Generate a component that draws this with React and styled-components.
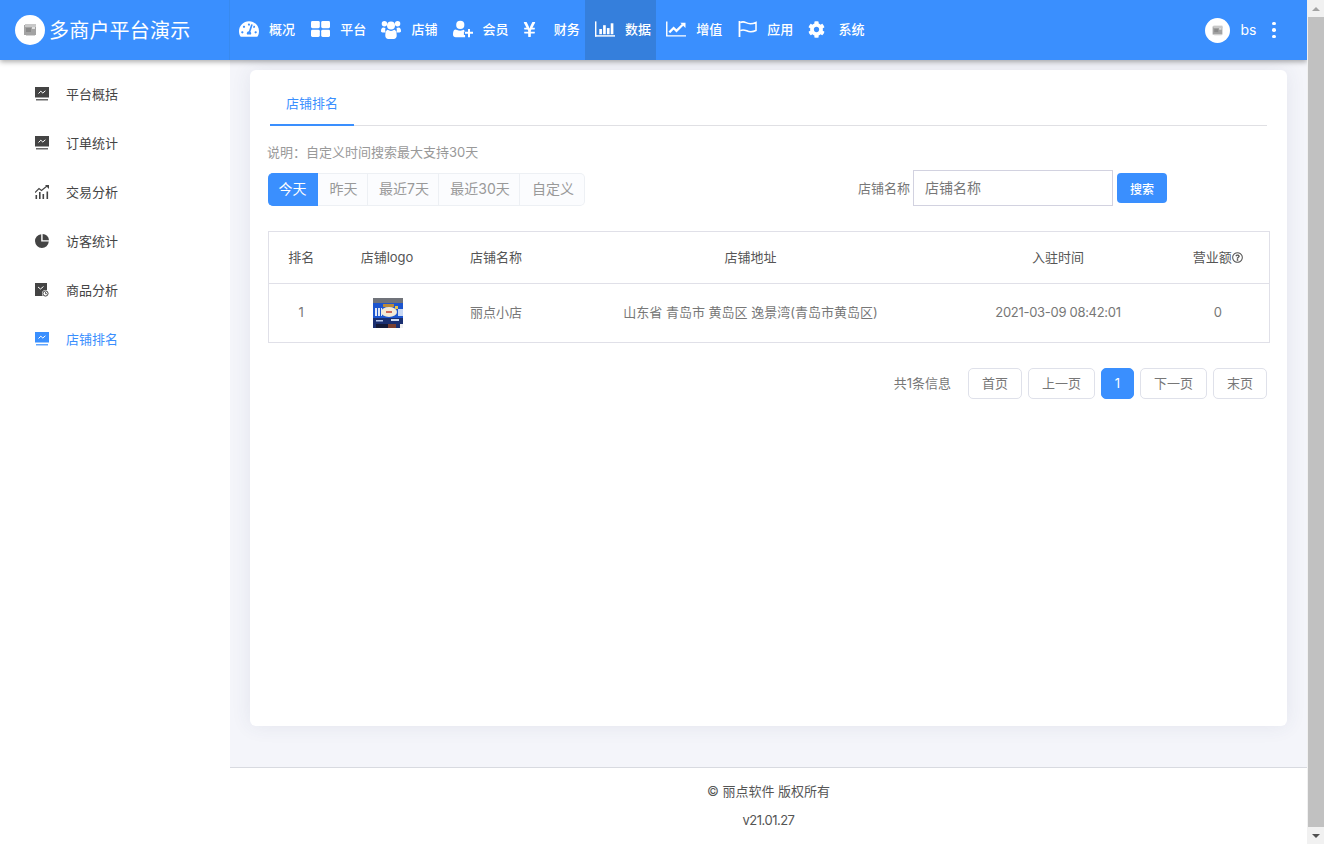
import React from 'react';
import styled, { createGlobalStyle } from 'styled-components';
import { FaTachometerAlt, FaYenSign, FaCog, FaRegQuestionCircle } from 'react-icons/fa';

const Global = createGlobalStyle`
  html { overflow: hidden; }
  body { margin: 0; padding-right: 17px; background: #f4f5fa; font-family: Inter, "Noto Sans CJK SC", sans-serif; font-size: 13px; color: #666; }
  * { box-sizing: border-box; }
`;

const ScrollBar = styled.div`
  position: fixed; top: 0; right: 0; bottom: 0; width: 17px; background: #f1f1f1; z-index: 5;
  display: flex; flex-direction: column;
`;
const ScrollArrow = styled.div`
  height: 17px; flex: none; display: flex; align-items: center; justify-content: center;
  &::before {
    content: ''; width: 0; height: 0; border-left: 4.5px solid transparent; border-right: 4.5px solid transparent;
    ${p => (p.$down ? 'border-top: 4px solid #505050;' : 'border-bottom: 4px solid #a3a3a3;')}
  }
`;
const ScrollThumb = styled.div`flex: 1; background: #c1c1c1; margin-left: 1px;`;

const Header = styled.header`
  display: flex; align-items: stretch; height: 60px; background: #3a8ffe; color: #fff;
  box-shadow: 0 2px 5px rgba(0,0,0,.32); position: relative; z-index: 2;
`;
const Brand = styled.div`
  width: 230px; flex: none; display: flex; align-items: center; gap: 4px; padding: 0 0 1px 15px;
  border-right: 1px solid #388aef;
  font-size: 20px; font-weight: 400; letter-spacing: .2px;
`;
const LogoDisc = styled.span`
  width: ${p => p.$size}px; height: ${p => p.$size}px; border-radius: 50%; background: #fff;
  display: flex; align-items: center; justify-content: center; flex: none;
`;
const Nav = styled.nav`display: flex; flex: 1; margin-left: -1px;`;
const NavItem = styled.a`
  width: 71.2px; flex: none; display: flex; align-items: center; padding: 0 0 2px 10px; gap: 10px;
  font-weight: 500; color: #fff; white-space: nowrap;
  background: ${p => (p.$active ? '#357fdc' : 'transparent')};
`;
const NavIcon = styled.span`
  width: 20px; height: 20px; flex: none; display: flex; align-items: center; justify-content: center; font-size: 20px;
`;
const NavLabel = styled.span`padding-bottom: 2px;`;
const User = styled.div`display: flex; align-items: center; padding-right: 31px;`;
const UserName = styled.span`font-size: 14px; margin-left: 10px; width: 32px; padding-bottom: 2px;`;
const Dots = styled.span`
  display: flex; flex-direction: column; gap: 3px;
  i { width: 3.6px; height: 3.6px; border-radius: 50%; background: #fff; display: block; }
`;

const Body = styled.div`display: flex; align-items: stretch;`;
const Side = styled.aside`
  width: 230px; flex: none; background: #fff; padding-top: 9px;
`;
const SideItem = styled.a`
  display: flex; align-items: center; height: 49px; padding-left: 35px; gap: 17px;
  color: ${p => (p.$active ? '#3a8ffe' : '#444')};
`;
const Main = styled.main`flex: 1; min-width: 0; display: flex; flex-direction: column;`;
const Content = styled.div`padding: 10px 20px 41px;`;
const Card = styled.section`
  height: 656px; background: #fff; border-radius: 6px; padding: 20px 20px 0 17px;
  box-shadow: 0 0 20px rgba(60,70,110,.09);
`;
const Tabs = styled.div`
  margin-left: 3px; height: 36px; border-bottom: 1px solid #e0e0e4; display: flex;
`;
const Tab = styled.div`
  width: 84px; height: 36px; text-align: center; line-height: 27px; color: #3a8ffe;
  border-bottom: 2px solid #3a8ffe;
`;
const Note = styled.p`margin: 16px 0 0; line-height: 20px; color: #999;`;
const Toolbar = styled.div`display: flex; align-items: center; margin-top: 8px; margin-left: 1px; height: 36px;`;
const Group = styled.div`display: flex; height: 33px; margin-top: 3px; flex: none;`;
const GroupBtn = styled.div`
  width: ${p => p.$w}px; display: flex; align-items: center; justify-content: center; font-size: 14px;
  padding: 0 0 3px ${p => (p.$active ? '0' : '2px')};
  color: ${p => (p.$active ? '#fff' : '#999')};
  background: ${p => (p.$active ? '#3a8ffe' : '#fbfcfe')};
  border: 1px solid ${p => (p.$active ? '#3a8ffe' : '#edf0f4')};
  border-left: 0;
  &:first-child { border-radius: 5px 0 0 5px; }
  &:last-child { border-radius: 0 5px 5px 0; }
`;
const SearchLabel = styled.label`margin-left: 272px; width: 56px; padding: 0 0 2px 1px; color: #777;`;
const SearchInput = styled.input`
  width: 200px; height: 36px; border: 1px solid #d2d2e0; padding: 0 11px 2px; font: inherit; font-size: 14px; outline: 0;
  &::placeholder { color: #777; opacity: 1; }
`;
const SearchBtn = styled.button`
  margin-left: 4px; width: 50px; height: 30px; border: 0; border-radius: 4px; background: #3a8ffe; color: #fff;
  font: inherit; font-size: 12px; font-weight: 500; padding: 0;
`;
const Table = styled.table`
  width: 1002px; margin: 25px 0 0 1px; border-collapse: collapse; table-layout: fixed; border: 1px solid #e0e0e8;
`;
const Th = styled.th`height: 52px; font-weight: 400; color: #555; text-align: center; border-bottom: 1px solid #e0e0e8; padding: 0 1px 2px 0;`;
const HelpIcon = styled(FaRegQuestionCircle)`font-size: 11px; vertical-align: -1px;`;
const Td = styled.td`
  height: 59px; color: #777; text-align: center; padding: 0 1px 3px 0;
  letter-spacing: ${p => (p.$tight ? '-0.3px' : '0')};
`;
const ThumbCell = styled.td`height: 59px; padding: 0 0 1px 1px;`;
const Thumb = styled.svg`display: block; margin: 0 auto;`;
const Pager = styled.div`display: flex; align-items: center; justify-content: flex-end; gap: 6px; margin: 25px 0 0; height: 31px;`;
const PagerInfo = styled.span`color: #777; margin-right: 11px; padding-bottom: 2px;`;
const PageBtn = styled.div`
  width: ${p => p.$w}px; height: 31px; display: flex; align-items: center; justify-content: center; border-radius: 5px; padding-bottom: 2px;
  border: 1px solid ${p => (p.$active ? '#3a8ffe' : '#dfe1ea')};
  background: ${p => (p.$active ? '#3a8ffe' : '#fff')};
  color: ${p => (p.$active ? '#fff' : '#777')};
`;
const Footer = styled.footer`
  height: 78px; background: #fff; border-top: 1px solid #d8dae0; text-align: center; color: #555;
  padding-top: 13px; line-height: 20px;
`;
const FooterLine = styled.div`margin-bottom: 9px;`;
const VersionLine = styled(FooterLine)`letter-spacing: -0.5px;`;

const Logo = ({ s = 16 }) => (
  <svg width={s} height={s} viewBox="0 0 16 16">
    <rect x="2" y="3" width="12" height="10" fill="#a3a3a3" />
    <rect x="3" y="2" width="11" height="3" fill="#c8c8c8" />
    <rect x="4" y="6" width="5" height="4" fill="#8a8a8a" />
    <rect x="10" y="5" width="3" height="2" fill="#e0e0e0" />
    <rect x="4" y="13" width="9" height="1" fill="#d4d4d4" />
  </svg>
);

const ThLargeIcon = () => (
  <svg width="19" height="16" viewBox="0 0 19 16" fill="#fff">
    <rect x="0" y="0" width="8.8" height="7.2" rx="1.4" />
    <rect x="10.2" y="0" width="8.8" height="7.2" rx="1.4" />
    <rect x="0" y="8.8" width="8.8" height="7.2" rx="1.4" />
    <rect x="10.2" y="8.8" width="8.8" height="7.2" rx="1.4" />
  </svg>
);
const UsersIcon = () => (
  <svg width="20" height="19" viewBox="0 0 20 19" fill="#fff">
    <circle cx="3.4" cy="3.8" r="2.7" />
    <circle cx="16.6" cy="3.8" r="2.7" />
    <circle cx="10" cy="5.6" r="4" />
    <path d="M0 11c0-2.4 1-3.6 2.2-3.6.9 0 1.5.5 2.3.7-.4.9-.4 2.7.2 4.3H1.500C.6 12.400 0 12 0 11z" />
    <path d="M20 11c0-2.4-1-3.600-2.200-3.600-.9 0-1.500.5-2.300.7.4.9.4 2.700-.2 4.300h3.200c.9 0 1.500-.4 1.500-1.400z" />
    <path d="M5.500 10.500c.9-1 1.500-.8 2.300-.2 1.300.8 3.100.8 4.400 0 .8-.6 1.400-.8 2.300.2 1 1.200 1.200 3.500 1.200 5.200 0 1.800-1.200 3.300-3 3.300H7.300c-1.800 0-3-1.500-3-3.300 0-1.700.2-4 1.200-5.200z" />
  </svg>
);
const UserPlusIcon = () => (
  <svg width="22" height="18" viewBox="0 0 22 18" fill="#fff">
    <circle cx="8" cy="4.500" r="4.500" />
    <path d="M2.500 9.500c1 0 2.700 1.300 5.500 1.300 1.700 0 3-.5 4-1 .6 1 .8 1.500.8 2.200H12v3.500h1.300V18H3c-1.800 0-3-1-3-3 0-2.800.7-5.500 2.500-5.500z" />
    <path d="M16.500 9h2.200v3h3.300v2.200h-3.300V18h-2.200v-3.800h-3.300V12h3.300z" />
  </svg>
);
const BarChartIcon = () => (
  <svg width="21" height="16" viewBox="0 0 21 16" fill="#fff">
    <rect x="0" y="0" width="1.500" height="16" />
    <rect x="0" y="14.500" width="21" height="1.500" />
    <rect x="4.500" y="8" width="2.800" height="5.500" />
    <rect x="8.500" y="4" width="2.800" height="9.500" />
    <rect x="12.500" y="7" width="2.800" height="6.500" />
    <rect x="16.500" y="2" width="2.800" height="11.500" />
  </svg>
);
const LineChartIcon = () => (
  <svg width="21" height="16" viewBox="0 0 21 16" fill="none">
    <path d="M.8 0v15.200H21" stroke="#fff" strokeWidth="1.500" />
    <path d="M3.500 11.500 8 7l3 3 6.500-6.500" stroke="#fff" strokeWidth="2.400" />
    <path d="M15 1.500h5.500V7z" fill="#fff" />
  </svg>
);
const FlagIcon = () => (
  <svg width="19" height="16" viewBox="0 0 19 16" fill="none" stroke="#fff">
    <path d="M1.500 0v16" strokeWidth="1.800" />
    <path d="M2.300 1.700c2-1.300 3.800-1 5.700 0 2.500 1.300 6 1.500 10-.2v8c-3.500 1.600-6.700 1.500-9.300.3-2.400-1.100-4.500-1.300-6.400-.2" strokeWidth="1.500" />
  </svg>
);

const nav = [
  [<FaTachometerAlt />, '概况'],
  [<ThLargeIcon />, '平台'],
  [<UsersIcon />, '店铺'],
  [<UserPlusIcon />, '会员'],
  [<FaYenSign style={{ fontSize: 17, marginLeft: -8 }} />, '财务'],
  [<BarChartIcon />, '数据', true],
  [<LineChartIcon />, '增值'],
  [<FlagIcon />, '应用'],
  [<FaCog style={{ fontSize: 17, marginLeft: -5 }} />, '系统'],
];

const MonitorIcon = ({ c }) => (
  <svg width="14" height="14" viewBox="0 0 14 14">
    <rect y="0" width="14" height="10.500" fill={c} />
    <path d="M3.500 6.500 5.800 4.200l2 1.800 2.600-2.200" fill="none" stroke="#fff" strokeWidth="1" />
    <rect x="1" y="12.200" width="12" height="1.200" fill={c} />
  </svg>
);
const TradeIcon = () => (
  <svg width="14" height="14" viewBox="0 0 14 14" fill="#444">
    <path d="M0 7.500 4 3.500l2.500 2L12 1" fill="none" stroke="#444" strokeWidth="1.200" />
    <path d="M10 0h4v4z" />
    <rect x="0.500" y="10" width="1.600" height="4" />
    <rect x="4" y="7" width="1.600" height="7" />
    <rect x="7.500" y="9" width="1.600" height="5" />
    <rect x="11.500" y="6.500" width="1.600" height="7.500" />
  </svg>
);
const PieIcon = () => (
  <svg width="14" height="14" viewBox="0 0 14 14" fill="#444">
    <path d="M6.200.2v7.400h7.600A6.900 6.900 0 1 1 6.200.2z" />
    <path d="M7.600 0A6.600 6.600 0 0 1 14 6.200H7.600z" />
  </svg>
);
const GoodsIcon = () => (
  <svg width="14" height="14" viewBox="0 0 14 14">
    <rect width="12" height="13" fill="#444" />
    <path d="M3 4l2.500 2L8.500 3.500" fill="none" stroke="#fff" strokeWidth="1" />
    <circle cx="10.500" cy="10.500" r="3.500" fill="#fff" />
    <circle cx="10.500" cy="10.500" r="2.600" fill="none" stroke="#444" strokeWidth="1" />
    <path d="M10.500 9v1.700h1.500" fill="none" stroke="#444" strokeWidth=".8" />
  </svg>
);

const side = [
  [<MonitorIcon c="#444" />, '平台概括'],
  [<MonitorIcon c="#444" />, '订单统计'],
  [<TradeIcon />, '交易分析'],
  [<PieIcon />, '访客统计'],
  [<GoodsIcon />, '商品分析'],
  [<MonitorIcon c="#3a8ffe" />, '店铺排名', true],
];

const ranges = [['今天', 50, true], ['昨天', 50], ['最近7天', 71], ['最近30天', 81], ['自定义', 65]];
const cols = [66, 106, 112, 397, 218, 102];
const heads = ['排名', '店铺logo', '店铺名称', '店铺地址', '入驻时间', '营业额'];
const pages = [['首页', 54], ['上一页', 67], ['1', 33, true], ['下一页', 67], ['末页', 54]];

const StoreThumb = () => (
  <Thumb width="30" height="30" viewBox="0 0 30 30">
    <rect width="30" height="30" fill="#1c55cf" />
    <rect width="30" height="5" fill="#70737a" />
    <rect x="2" y="10" width="7" height="8" fill="#dfe8f8" />
    <rect x="4" y="10" width="1" height="8" fill="#1c55cf" />
    <rect x="7" y="10" width="1" height="8" fill="#1c55cf" />
    <rect x="10" y="6" width="11" height="3" fill="#b98a3a" />
    <ellipse cx="16" cy="14" rx="8" ry="5" fill="#f3ead6" />
    <rect x="13" y="13" width="6" height="2" fill="#d0695a" />
    <rect x="22" y="8" width="3" height="3" fill="#e6c24a" />
    <rect x="25" y="11" width="5" height="7" fill="#c8d8f4" />
    <rect y="20" width="30" height="10" fill="#1a2f70" />
    <rect x="3" y="22" width="7" height="1.500" fill="#b8c8ea" />
    <rect x="18" y="21" width="8" height="2" fill="#d0dcf2" />
    <rect x="3" y="26" width="12" height="4" fill="#141a38" />
    <rect x="15" y="26" width="8" height="4" fill="#7a3f30" />
    <rect x="27" y="26" width="3" height="4" fill="#f0f0f0" />
  </Thumb>
);

export default function App() {
  return (
    <>
      <Global />
      <ScrollBar>
        <ScrollArrow />
        <ScrollThumb />
        <ScrollArrow $down />
      </ScrollBar>
      <Header>
        <Brand>
          <LogoDisc $size={30}><Logo s={16} /></LogoDisc>
          多商户平台演示
        </Brand>
        <Nav>
          {nav.map(([icon, label, active]) => (
            <NavItem key={label} $active={active}>
              <NavIcon>{icon}</NavIcon>
              <NavLabel>{label}</NavLabel>
            </NavItem>
          ))}
        </Nav>
        <User>
          <LogoDisc $size={25}><Logo s={13} /></LogoDisc>
          <UserName>bs</UserName>
          <Dots><i /><i /><i /></Dots>
        </User>
      </Header>
      <Body>
        <Side>
          {side.map(([icon, label, active]) => (
            <SideItem key={label} $active={active}>{icon}{label}</SideItem>
          ))}
        </Side>
        <Main>
          <Content>
            <Card>
              <Tabs><Tab>店铺排名</Tab></Tabs>
              <Note>说明：自定义时间搜索最大支持30天</Note>
              <Toolbar>
                <Group>
                  {ranges.map(([t, w, a]) => (
                    <GroupBtn key={t} $w={w} $active={a}>{t}</GroupBtn>
                  ))}
                </Group>
                <SearchLabel>店铺名称</SearchLabel>
                <SearchInput placeholder="店铺名称" />
                <SearchBtn>搜索</SearchBtn>
              </Toolbar>
              <Table>
                <colgroup>{cols.map((w, i) => <col key={i} width={w} />)}</colgroup>
                <thead>
                  <tr>{heads.map((h, i) => <Th key={h}>{h}{i === 5 && <HelpIcon />}</Th>)}</tr>
                </thead>
                <tbody>
                  <tr>
                    <Td>1</Td>
                    <ThumbCell><StoreThumb /></ThumbCell>
                    <Td>丽点小店</Td>
                    <Td>山东省 青岛市 黄岛区 逸景湾(青岛市黄岛区)</Td>
                    <Td $tight>2021-03-09 08:42:01</Td>
                    <Td>0</Td>
                  </tr>
                </tbody>
              </Table>
              <Pager>
                <PagerInfo>共1条信息</PagerInfo>
                {pages.map(([t, w, a]) => <PageBtn key={t} $w={w} $active={a}>{t}</PageBtn>)}
              </Pager>
            </Card>
          </Content>
          <Footer>
            <FooterLine>© 丽点软件 版权所有</FooterLine>
            <VersionLine>v21.01.27</VersionLine>
          </Footer>
        </Main>
      </Body>
    </>
  );
}
